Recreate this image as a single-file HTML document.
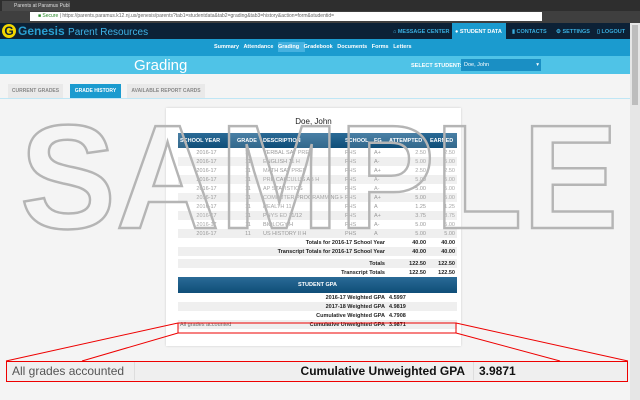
<!DOCTYPE html>
<html><head><meta charset="utf-8"><style>
*{margin:0;padding:0;box-sizing:border-box}
body{width:640px;height:400px;overflow:hidden;background:#f4f4f4;font-family:"Liberation Sans",sans-serif;position:relative}
.abs{position:absolute}
.tabs{left:0;top:0;width:640px;height:11px;background:#2e2e2e}
.tab1{left:2px;top:1px;width:68px;height:10px;background:#4a4a4a;color:#ddd;font-size:5px;line-height:10px;padding-left:12px}
.tool{left:0;top:11px;width:640px;height:12px;background:#3f3f3f}
.url{left:30px;top:12px;width:512px;height:9px;background:#fff;font-size:5px;line-height:9px;color:#666;padding-left:8px;white-space:nowrap;overflow:hidden}
.hdr{left:0;top:23px;width:640px;height:16px;background:#0c2136}
.nav{left:0;top:39px;width:640px;height:17px;background:#1b9bcf}
.ttl{left:0;top:56px;width:630px;height:18px;background:#4fc3e7}
.w{color:#fff;font-weight:bold;font-size:5.5px}
.sb{left:630px;top:23px;width:10px;height:377px;background:#e6e6e6}
.card{left:166px;top:108px;width:295px;height:238px;background:#fff;box-shadow:0 0 2px #ccc}
table{border-collapse:collapse;font-size:5.5px;color:#999;table-layout:fixed}
td,th{height:9px;padding:0 2px;white-space:nowrap;overflow:hidden}
th{background:linear-gradient(#2a6a96,#0f4e78);color:#fff;height:15px;font-size:5.5px;text-align:left}
tr.g td{background:#efefef}
.b{color:#222;font-weight:bold;text-align:right}
.r{text-align:right}.c{text-align:center}
.wm{left:20px;top:104px;font-size:148px;font-weight:bold;color:rgba(255,255,255,0.15);-webkit-text-stroke:2.5px #b5b5b5;line-height:1;transform:scaleX(0.97);transform-origin:0 0;white-space:nowrap}
</style></head><body>
<div class="abs tabs"></div><div class="abs tab1">Parents at Paramus Publ ×</div>
<div class="abs tool"></div>
<div class="abs url"><span style="color:#2a8a2a">■ Secure</span> | https://parents.paramus.k12.nj.us/genesis/parents?tab1=studentdata&amp;tab2=grading&amp;tab3=history&amp;action=form&amp;studentid=</div>
<div class="abs hdr"></div>
<div class="abs" style="left:2px;top:24px;width:14px;height:14px;border-radius:50%;background:#f2d600;color:#0c2136;font-weight:bold;font-size:12px;line-height:14px;text-align:center">G</div>
<div class="abs" style="left:18px;top:24px;font-size:12px;color:#2a9fd0;font-weight:bold">Genesis <span style="font-weight:normal;font-size:10px;color:#3fb3e6">Parent Resources</span></div>
<div class="abs" style="left:452px;top:23px;width:54px;height:16px;background:#1b9bcf"></div>
<div class="abs w" style="top:29px;left:393px;color:#3aaedf">⌂ MESSAGE CENTER</div>
<div class="abs w" style="top:29px;left:455px">● STUDENT DATA</div>
<div class="abs w" style="top:29px;left:512px;color:#3aaedf">▮ CONTACTS</div>
<div class="abs w" style="top:29px;left:556px;color:#3aaedf">⚙ SETTINGS</div>
<div class="abs w" style="top:29px;left:597px;color:#3aaedf">▯ LOGOUT</div>
<div class="abs nav"></div>
<div class="abs" style="left:278px;top:42px;width:27px;height:10px;background:#46b2e0"></div>
<div class="abs w" style="top:44px;left:214px">Summary&nbsp;&nbsp; Attendance&nbsp;&nbsp; Grading&nbsp;&nbsp; Gradebook&nbsp;&nbsp; Documents&nbsp;&nbsp; Forms&nbsp;&nbsp; Letters</div>
<div class="abs ttl"></div>
<div class="abs" style="left:134px;top:57px;font-size:15px;color:#fff">Grading</div>
<div class="abs w" style="top:63px;left:411px">SELECT STUDENT:</div>
<div class="abs" style="left:461px;top:59px;width:80px;height:12px;background:#1a8fc4;color:#fff;font-size:5.5px;line-height:12px;padding-left:3px">Doe, John<span style="float:right;padding-right:2px">▾</span></div>
<div class="abs" style="left:8px;top:84px;width:55px;height:14px;background:#e9e9e9;color:#888;font-size:5px;font-weight:bold;line-height:14px;text-align:center">CURRENT GRADES</div>
<div class="abs" style="left:70px;top:84px;width:51px;height:14px;background:#1b9bcf;color:#fff;font-size:5px;font-weight:bold;line-height:14px;text-align:center">GRADE HISTORY</div>
<div class="abs" style="left:127px;top:84px;width:78px;height:14px;background:#e9e9e9;color:#888;font-size:5px;font-weight:bold;line-height:14px;text-align:center">AVAILABLE REPORT CARDS</div>
<div class="abs" style="left:0;top:98px;width:630px;height:1px;background:#bfe6f5"></div>
<div class="abs sb"></div><div class="abs" style="left:632px;top:25px;width:6px;height:80px;background:#bdbdbd"></div>
<div class="abs card"></div>
<div class="abs" style="left:166px;top:117px;width:295px;text-align:center;font-size:8px;color:#222">Doe, John</div>
<table class="abs" style="left:178px;top:133px;width:279px">
<colgroup><col style="width:57px"><col style="width:26px"><col style="width:82px"><col style="width:29px"><col style="width:15px"><col style="width:41px"><col style="width:29px"></colgroup>
<tr><th>SCHOOL YEAR</th><th>GRADE</th><th>DESCRIPTION</th><th>SCHOOL</th><th>FG</th><th>ATTEMPTED</th><th>EARNED</th></tr>
<tr><td class="c">2016-17</td><td class="c">11</td><td>VERBAL SAT PREP</td><td>PHS</td><td>A+</td><td class="r">2.50</td><td class="r">2.50</td></tr>
<tr class="g"><td class="c">2016-17</td><td class="c">11</td><td>ENGLISH 11 H</td><td>PHS</td><td>A-</td><td class="r">5.00</td><td class="r">5.00</td></tr>
<tr><td class="c">2016-17</td><td class="c">11</td><td>MATH SAT PREP</td><td>PHS</td><td>A+</td><td class="r">2.50</td><td class="r">2.50</td></tr>
<tr class="g"><td class="c">2016-17</td><td class="c">11</td><td>PRE CALCULUS AB H</td><td>PHS</td><td>A-</td><td class="r">5.00</td><td class="r">5.00</td></tr>
<tr><td class="c">2016-17</td><td class="c">11</td><td>AP STATISTICS</td><td>PHS</td><td>A-</td><td class="r">5.00</td><td class="r">5.00</td></tr>
<tr class="g"><td class="c">2016-17</td><td class="c">11</td><td>COMPUTER PROGRAMMING H</td><td>PHS</td><td>A+</td><td class="r">5.00</td><td class="r">5.00</td></tr>
<tr><td class="c">2016-17</td><td class="c">11</td><td>HEALTH 11</td><td>PHS</td><td>A</td><td class="r">1.25</td><td class="r">1.25</td></tr>
<tr class="g"><td class="c">2016-17</td><td class="c">11</td><td>PHYS ED 11/12</td><td>PHS</td><td>A+</td><td class="r">3.75</td><td class="r">3.75</td></tr>
<tr><td class="c">2016-17</td><td class="c">11</td><td>BIOLOGY H</td><td>PHS</td><td>A-</td><td class="r">5.00</td><td class="r">5.00</td></tr>
<tr class="g"><td class="c">2016-17</td><td class="c">11</td><td>US HISTORY II H</td><td>PHS</td><td>A</td><td class="r">5.00</td><td class="r">5.00</td></tr>
<tr><td colspan="5" class="b">Totals for 2016-17 School Year</td><td class="b">40.00</td><td class="b">40.00</td></tr>
<tr class="g"><td colspan="5" class="b">Transcript Totals for 2016-17 School Year</td><td class="b">40.00</td><td class="b">40.00</td></tr>
<tr><td colspan="7" style="height:3px"></td></tr>
<tr class="g"><td colspan="5" class="b">Totals</td><td class="b">122.50</td><td class="b">122.50</td></tr>
<tr><td colspan="5" class="b">Transcript Totals</td><td class="b">122.50</td><td class="b">122.50</td></tr>
<tr><th colspan="7" style="text-align:center;height:16px">STUDENT GPA</th></tr>
<tr><td colspan="5" class="b">2016-17 Weighted GPA</td><td colspan="2" class="b" style="text-align:left">4.5997</td></tr>
<tr class="g"><td colspan="5" class="b">2017-18 Weighted GPA</td><td colspan="2" class="b" style="text-align:left">4.9819</td></tr>
<tr><td colspan="5" class="b">Cumulative Weighted GPA</td><td colspan="2" class="b" style="text-align:left">4.7908</td></tr>
<tr class="g"><td colspan="2" style="color:#666">All grades accounted</td><td colspan="3" class="b">Cumulative Unweighted GPA</td><td colspan="2" class="b" style="text-align:left">3.9871</td></tr>
</table>
<div class="abs wm">SAMPLE</div>
<svg class="abs" style="left:0;top:0" width="640" height="400">
<rect x="178" y="323" width="278" height="10" fill="none" stroke="#e00" stroke-width="1"/>
<line x1="178" y1="323" x2="6" y2="361" stroke="#e00"/><line x1="178" y1="333" x2="82" y2="361" stroke="#e00"/>
<line x1="456" y1="323" x2="628" y2="361" stroke="#e00"/><line x1="456" y1="333" x2="560" y2="361" stroke="#e00"/>
</svg>
<div class="abs" style="left:6px;top:361px;width:622px;height:21px;border:1.5px solid #e00;background:#efefef;font-size:12px;line-height:18px">
<span class="abs" style="left:5px;color:#555">All grades accounted</span>
<span class="abs" style="left:127px;top:0;width:1px;height:18px;background:#ddd"></span>
<span class="abs" style="right:162px;color:#111;font-weight:bold">Cumulative Unweighted GPA</span>
<span class="abs" style="left:466px;top:0;width:1px;height:18px;background:#ddd"></span>
<span class="abs" style="left:472px;color:#111;font-weight:bold">3.9871</span>
</div>
</body></html>
